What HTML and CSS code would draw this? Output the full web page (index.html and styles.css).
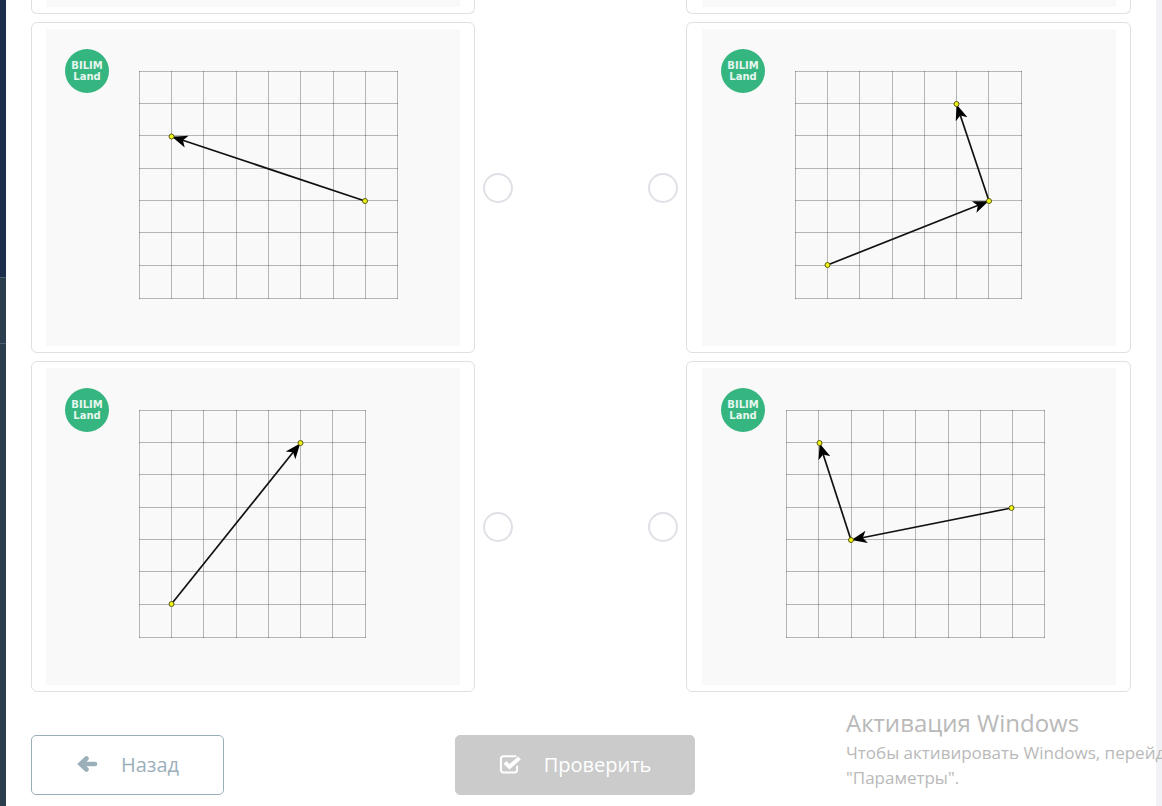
FILE: index.html
```html
<!DOCTYPE html>
<html lang="ru">
<head>
<meta charset="utf-8">
<title>BILIM Land</title>
<link rel="stylesheet" href="styles.css">
</head>
<body>
<svg class="defs" aria-hidden="true">
  <defs>
    <marker id="head" markerUnits="userSpaceOnUse" markerWidth="20" markerHeight="16" refX="16" refY="8" orient="auto">
      <path d="M15.5 8 L0 14.2 L4 8 L0 1.8Z"/>
    </marker>
    <g id="logo">
      <circle cx="41" cy="42" r="22" fill="#35b57f"/>
      <text class="logo-text" x="41" y="40">BILIM</text>
      <text class="logo-text" x="41" y="51">Land</text>
    </g>
    <path id="grid-wide" class="grid" d="M93 42.5H352M93 74.5H352M93 106.5H352M93 139.5H352M93 171.5H352M93 203.5H352M93 236.5H352M93 269.5H352M93.5 42V270M125.5 42V270M157.5 42V270M190.5 42V270M222.5 42V270M254.5 42V270M287.5 42V270M319.5 42V270M351.5 42V270"/>
    <path id="grid-square" class="grid" d="M93 42.5H320M93 74.5H320M93 106.5H320M93 139.5H320M93 171.5H320M93 203.5H320M93 236.5H320M93 269.5H320M93.5 42V270M125.5 42V270M157.5 42V270M190.5 42V270M222.5 42V270M254.5 42V270M286.5 42V270M319.5 42V270"/>
  </defs>
</svg>
<div class="app">
  <aside class="sidebar"><div class="side-top"></div><div class="side-item"></div><div class="side-rest"></div></aside>
  <main class="content">
    <div class="row">
      <div class="card card-end"><div class="scrap"></div></div>
      <div></div>
      <div class="card card-end card-right"><div class="scrap"></div></div>
    </div>
    <div class="row">
      <label class="card" for="l1">
        <svg class="picture" viewBox="0 0 414 317" role="img" aria-label="Вектор 1">
          <use href="#logo"/><use href="#grid-wide"/>
          <path class="vector" d="M319 172L125.500 107.500"/>
          <circle class="point" cx="319" cy="172" r="2.500"/><circle class="point" cx="125.500" cy="107.500" r="2.500"/>
        </svg>
      </label>
      <div class="links">
        <input class="dot" type="radio" name="left" id="l1">
        <input class="dot" type="radio" name="right" id="r1">
      </div>
      <label class="card card-right" for="r1">
        <svg class="picture" viewBox="0 0 414 317" role="img" aria-label="Сумма векторов 1">
          <use href="#logo"/><use href="#grid-square"/>
          <path class="vector" d="M125.500 236L287 172"/>
          <path class="vector" d="M287 172L254.500 75"/>
          <circle class="point" cx="125.500" cy="236" r="2.500"/><circle class="point" cx="287" cy="172" r="2.500"/><circle class="point" cx="254.500" cy="75" r="2.500"/>
        </svg>
      </label>
    </div>
    <div class="row">
      <label class="card" for="l2">
        <svg class="picture" viewBox="0 0 414 317" role="img" aria-label="Вектор 2">
          <use href="#logo"/><use href="#grid-square"/>
          <path class="vector" d="M125.500 236L254.500 75"/>
          <circle class="point" cx="125.500" cy="236" r="2.500"/><circle class="point" cx="254.500" cy="75" r="2.500"/>
        </svg>
      </label>
      <div class="links">
        <input class="dot" type="radio" name="left" id="l2">
        <input class="dot" type="radio" name="right" id="r2">
      </div>
      <label class="card card-right" for="r2">
        <svg class="picture" viewBox="0 0 414 317" role="img" aria-label="Сумма векторов 2">
          <use href="#logo"/>
          <path class="grid" d="M84 42.500H343M84 74.500H343M84 106.500H343M84 139.500H343M84 171.500H343M84 203.500H343M84 236.500H343M84 269.500H343M84.500 42V270M116.500 42V270M149.500 42V270M181.500 42V270M213.500 42V270M246.500 42V270M278.500 42V270M310.500 42V270M342.500 42V270"/>
          <path class="vector" d="M309.500 140L149 172"/>
          <path class="vector" d="M149 172L117.500 75"/>
          <circle class="point" cx="309.500" cy="140" r="2.500"/><circle class="point" cx="149" cy="172" r="2.500"/><circle class="point" cx="117.500" cy="75" r="2.500"/>
        </svg>
      </label>
    </div>
    <footer class="actions">
      <button class="btn btn-back" type="button">
        <svg width="22" height="20" viewBox="0 0 22 20" aria-hidden="true"><path d="M10.500 4.500L4.500 10L10.500 15.500M5.500 10H19" fill="none" stroke="currentColor" stroke-width="4.500" stroke-linecap="round" stroke-linejoin="miter"/></svg>
        Назад
      </button>
      <button class="btn btn-check" type="button">
        <svg width="22" height="20" viewBox="0 0 22 20" aria-hidden="true"><path d="M16.500 2.200H4.500A2.600 2.600 0 0 0 1.900 4.800V15.800A2.600 2.600 0 0 0 4.500 18.400H15.500A2.600 2.600 0 0 0 18.100 15.800V12.500" fill="none" stroke="currentColor" stroke-width="2" stroke-linecap="round"/><path d="M6 8.500L10.500 12.700L20.500 4" fill="none" stroke="currentColor" stroke-width="4"/></svg>
        Проверить
      </button>
    </footer>
  </main>
  <div class="scrollbar"></div>
</div>
<div class="watermark">
  <p class="wm-title">Активация Windows</p>
  <p class="wm-text">Чтобы активировать Windows, перейд</p>
  <p class="wm-text">"Параметры".</p>
</div>
</body>
</html>
```
FILE: styles.css
```css
* { box-sizing: border-box; }
body {
  margin: 0;
  background: #fff;
  font-family: "Open Sans", "Noto Sans", sans-serif;
  overflow-x: hidden;
}
.defs { position: absolute; width: 0; height: 0; }
.app { display: flex; min-height: 100vh; }
.sidebar { width: 6px; display: flex; flex-direction: column; background: #2c3e4e; }
.side-top { height: 277px; background: #1b2f4d; }
.side-item { height: 67px; border-top: 1px solid #4c6173; border-bottom: 1px solid #4c6173; }
.side-rest { flex: 1; }
.scrollbar { width: 6px; background: #f1f2f5; }
.content { flex: 1; min-width: 0; padding: 0 25px 11px; }

.row { display: grid; grid-template-columns: 444fr 211px 445fr; margin-bottom: 8px; }
.card {
  display: block;
  padding: 6px 14px;
  border: 1px solid #e0e0e3;
  border-radius: 6px;
}
.card-right { padding-left: 15px; }
.card-end { padding-top: 0; border-top: 0; border-radius: 0 0 6px 6px; }
.scrap { height: 7px; background: #f9f9f9; }
.picture { display: block; width: 100%; height: auto; background: #f9f9f9; }
.links { display: flex; align-items: center; justify-content: space-between; padding: 0 8px; }
.dot {
  appearance: none;
  width: 30px;
  height: 30px;
  margin: 0;
  border: 2px solid #e0e0e6;
  border-radius: 50%;
  background: #fff;
}
.dot:checked { background: #35b57f; }

.grid { fill: none; stroke: #000; stroke-opacity: 0.27; stroke-width: 1; }
.vector { fill: none; stroke: #111; stroke-width: 1.7; marker-end: url(#head); }
.point { fill: #f0f314; stroke: #5c5c14; stroke-width: 1; }
.logo-text {
  fill: #e6f7ef;
  font-family: "DejaVu Sans", sans-serif;
  font-size: 10px;
  font-weight: 700;
  text-anchor: middle;
}

.actions { display: flex; gap: 231px; padding-top: 35px; }
.btn {
  display: flex;
  align-items: center;
  justify-content: center;
  gap: 23px;
  height: 60px;
  border: 1px solid #98afba;
  border-radius: 5px;
  padding: 0 0 2px;
  font: inherit;
  font-size: 20px;
}
.btn-back { width: 193px; background: #fff; color: #9aafba; }
.btn-check { width: 240px; background: #cbcbcb; border-color: #cbcbcb; color: #fff; }

.watermark {
  position: absolute;
  left: 846px;
  right: 0;
  bottom: 16px;
  white-space: nowrap;
  color: #b9b9b9;
}
.watermark p { margin: 0; }
.wm-title { font-size: 24px; line-height: 34px; }
.wm-text { font-size: 17px; line-height: 25px; }
```
